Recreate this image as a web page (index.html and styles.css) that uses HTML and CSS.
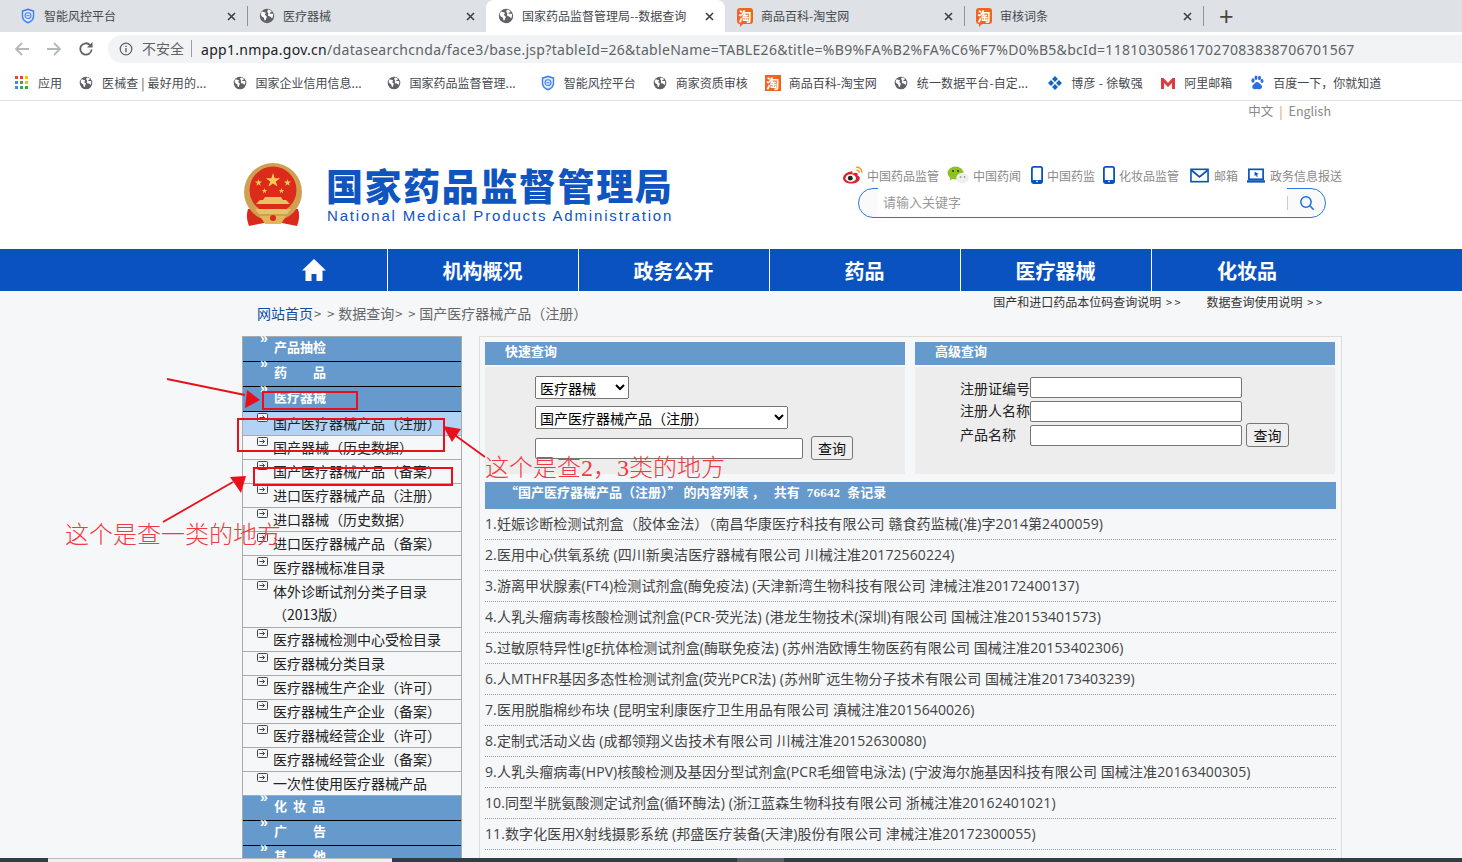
FILE: index.html
```html
<!DOCTYPE html>
<html lang="zh-CN">
<head>
<meta charset="utf-8">
<title>国家药品监督管理局--数据查询</title>
<link rel="stylesheet" href="styles.css">
</head>
<body>
<svg class="defs" width="0" height="0" aria-hidden="true">
  <symbol id="globe" viewBox="0 0 16 16">
    <circle cx="8" cy="8" r="7.2" fill="#5f6368"/>
    <path d="M3 3.600c1.600.2 2.200 1 3.400 1 .9.4.2 1.600-.5 2-.2 1 1.800 1 1.900 2.200 0 1-.8 1.300-.8 2.500-.2 1-.9 1.500-1.400.9-.8-1-.3-2.300-1.200-3-1.400-.2-2.400-1.400-2.500-2.800C2.200 5 2.500 4.200 3 3.600zM9.300 1.600c1.300.2 2.500.9 3.300 1.800-.2.800-1 .8-1.700 1.200-.6.5-.2 1.200.6 1.200.8.100 1.800-.5 2.400.2.300 1.500 0 3-.7 4.200-.5-.1-.8-.8-1.300-1.300-.9-.6-2.300-.5-2.900-1.300-.3-.8.500-1.500.2-2.300-.5-.9-1.100-1.500-.9-2.700.1-.1.300-.2.600-.2z" fill="#fff"/>
  </symbol>
  <symbol id="shield" viewBox="0 0 16 18">
    <path d="M8 .6l7 2.200v6.400c0 3.800-3 6.600-7 8.200-4-1.600-7-4.400-7-8.200V2.800z" fill="#3f7fee"/>
    <path d="M8 2.400l5.400 1.700v5.100c0 2.900-2.300 5.100-5.400 6.400-3.100-1.300-5.400-3.500-5.400-6.400V4.100z" fill="#dfeafc"/>
    <circle cx="8" cy="8.600" r="3.300" fill="none" stroke="#3f7fee" stroke-width="1.200"/>
    <path d="M6.400 8.600h3.200" stroke="#3f7fee" stroke-width="1.200"/>
  </symbol>
  <symbol id="phone" viewBox="0 0 12 18">
    <rect x=".9" y=".9" width="10.200" height="16.200" rx="1.800" fill="none" stroke="#0b52c1" stroke-width="1.800"/>
    <path d="M1 14h10v3H1z" fill="#0b52c1"/>
    <circle cx="6" cy="15.300" r=".9" fill="#fff"/>
  </symbol>
  <symbol id="box" viewBox="0 0 11 9">
    <rect x=".5" y=".5" width="10" height="8" rx="1" fill="#f4f4f4" stroke="#444"/>
    <path d="M2.500 4.500h5M5.500 2.500l2 2-2 2" fill="none" stroke="#444"/>
  </symbol>
  <symbol id="close" viewBox="0 0 9 9">
    <path d="M1 1l7 7M8 1L1 8" fill="none" stroke="#3c4043" stroke-width="1.600"/>
  </symbol>
</svg>

<header class="chrome">
  <div class="tabs">
    <div class="tab"><svg class="ico16"><use href="#shield"/></svg><span class="tab-t">智能风控平台</span><svg class="tab-x"><use href="#close"/></svg></div>
    <div class="tab"><svg class="ico16"><use href="#globe"/></svg><span class="tab-t">医疗器械</span><svg class="tab-x"><use href="#close"/></svg></div>
    <div class="tab tab-on"><svg class="ico16"><use href="#globe"/></svg><span class="tab-t">国家药品监督管理局--数据查询</span><svg class="tab-x"><use href="#close"/></svg></div>
    <div class="tab"><span class="tao tao-tab">淘</span><span class="tab-t">商品百科-淘宝网</span><svg class="tab-x"><use href="#close"/></svg></div>
    <div class="tab"><span class="tao tao-tab">淘</span><span class="tab-t">审核词条</span><svg class="tab-x"><use href="#close"/></svg></div>
    <span class="tab-plus">+</span>
  </div>
  <div class="toolbar">
    <svg class="tb-ico" viewBox="0 0 16 16"><path d="M15 8H2M8 2L2 8l6 6" fill="none" stroke="#b4b7bb" stroke-width="1.800"/></svg>
    <svg class="tb-ico" viewBox="0 0 16 16"><path d="M1 8h13M8 2l6 6-6 6" fill="none" stroke="#b4b7bb" stroke-width="1.800"/></svg>
    <svg class="tb-ico" viewBox="0 0 16 16"><path d="M13.600 8.500a5.700 5.700 0 1 1-1.500-4.400" fill="none" stroke="#5f6368" stroke-width="1.800"/><path d="M14.500 1v5.500H9z" fill="#5f6368"/></svg>
    <div class="omni">
      <svg class="omni-i" viewBox="0 0 14 14"><circle cx="7" cy="7" r="5.800" fill="none" stroke="#5f6368" stroke-width="1.300"/><path d="M7 6v4.200M7 3.800v1.300" stroke="#5f6368" stroke-width="1.400"/></svg>
      <span class="omni-s">不安全</span>
      <span class="omni-url"><b>app1.nmpa.gov.cn</b>/datasearchcnda/face3/base.jsp?tableId=26&amp;tableName=TABLE26&amp;title=%B9%FA%B2%FA%C6%F7%D0%B5&amp;bcId=118103058617027083838706701567</span>
    </div>
  </div>
  <nav class="bookmarks">
    <span class="bm"><svg class="ico14" viewBox="0 0 14 14"><g><rect x="0" y="0" width="3" height="3" fill="#ea4335"/><rect x="5" y="0" width="3" height="3" fill="#ea4335"/><rect x="10" y="0" width="3" height="3" fill="#fbbc04"/><rect x="0" y="5" width="3" height="3" fill="#4285f4"/><rect x="5" y="5" width="3" height="3" fill="#34a853"/><rect x="10" y="5" width="3" height="3" fill="#fbbc04"/><rect x="0" y="10" width="3" height="3" fill="#4285f4"/><rect x="5" y="10" width="3" height="3" fill="#34a853"/><rect x="10" y="10" width="3" height="3" fill="#34a853"/></g></svg>应用</span>
    <span class="bm bm-a"><svg class="ico14"><use href="#globe"/></svg>医械查 | 最好用的...</span>
    <span class="bm bm-b"><svg class="ico14"><use href="#globe"/></svg>国家企业信用信息...</span>
    <span class="bm bm-c"><svg class="ico14"><use href="#globe"/></svg>国家药品监督管理...</span>
    <span class="bm bm-16"><svg class="ico16"><use href="#shield"/></svg>智能风控平台</span>
    <span class="bm"><svg class="ico14"><use href="#globe"/></svg>商家资质审核</span>
    <span class="bm bm-16"><span class="tao">淘</span>商品百科-淘宝网</span>
    <span class="bm bm-d"><svg class="ico14"><use href="#globe"/></svg>统一数据平台-自定...</span>
    <span class="bm bm-e"><svg class="ico14" viewBox="0 0 14 14"><path d="M7 0l3 3-3 3-3-3zM3 4l3 3-3 3-3-3zM11 4l3 3-3 3-3-3zM7 8l3 3-3 3-3-3z" fill="#1565c0"/></svg>博彦 - 徐敏强</span>
    <span class="bm bm-16"><svg class="ico16" viewBox="0 0 16 14"><path d="M1 13V2h2.500L8 7l4.500-5H15v11h-3V7L8 11 4 7v6z" fill="#e0393e"/></svg>阿里邮箱</span>
    <span class="bm bm-16"><svg class="ico16" viewBox="0 0 16 16"><g fill="#2f6fe0"><ellipse cx="4" cy="5.500" rx="1.600" ry="2.200"/><ellipse cx="7" cy="2.800" rx="1.500" ry="2.200"/><ellipse cx="10.500" cy="3" rx="1.500" ry="2.200"/><ellipse cx="13" cy="6" rx="1.500" ry="2"/><path d="M8 7c-2 0-2.500 2-4 3-1.500 1.500-.5 4.500 2 4.200 1-.1 1.500-.3 2.200-.3s1.500.3 2.300.3c2.500 0 3.300-2.700 1.800-4.200C10.800 9 10 7 8 7z"/></g></svg>百度一下，你就知道</span>
  </nav>
</header>

<div class="site-top">
  <div class="wrap">
    <div class="lang">中文<i>|</i>English</div>
    <div class="brand">
      <svg class="emblem" viewBox="0 0 60 64">
        <path d="M5 46c-2 6-1 12 1 17l15-3h18l15 3c2-5 3-11 1-17z" fill="#d92a1c"/>
        <circle cx="30" cy="29" r="29" fill="#cfa052"/>
        <circle cx="30" cy="27" r="23.500" fill="#dc2b1b"/>
        <path d="M30 10l1.700 5.200h5.500l-4.400 3.200 1.700 5.200-4.500-3.200-4.500 3.200 1.700-5.200-4.400-3.200h5.500z" fill="#f5cd55"/>
        <path d="M15.500 16l.9 2.600h2.700l-2.200 1.600.9 2.600-2.300-1.600-2.200 1.600.8-2.600-2.200-1.600h2.700zM44.500 16l.9 2.600h2.700l-2.200 1.600.9 2.600-2.300-1.600-2.200 1.600.8-2.600-2.200-1.600h2.700zM21.500 25l.7 2h2.200l-1.800 1.300.7 2.100-1.800-1.300-1.800 1.300.7-2.100-1.800-1.300h2.200zM38.500 25l.7 2h2.200l-1.800 1.300.7 2.100-1.800-1.300-1.800 1.300.7-2.100-1.800-1.300h2.200z" fill="#f3c64c"/>
        <path d="M13 41h34l-4-4h-3l-2-3H22l-2 3h-3z" fill="#e9c267"/>
        <path d="M16 41h28v5H16z" fill="#dc2b1b"/>
        <path d="M12 46h36l-4 5H16z" fill="#e9c267"/>
        <path d="M17 53h26l-5 8H22z" fill="#e4b65a"/>
        <circle cx="30" cy="55" r="3" fill="#d92a1c"/>
      </svg>
      <div class="wordmark">
        <h1 class="wm-cn">国家药品监督管理局</h1>
        <p class="wm-en">National Medical Products Administration</p>
      </div>
      <div class="tools">
        <div class="links">
          <span class="lnk"><svg class="weibo" viewBox="0 0 24 20"><path d="M10 6C5 6.500 1 10 1 13.500S5 19.500 10 19.500s9.500-2.500 9.500-6c0-2-2-2.500-2.500-3 .6-1.500.3-3-2-3-1.200 0-2.500.5-3.500 1 .2-2-.4-3-1.500-2.500z" fill="#d8232a"/><ellipse cx="9.500" cy="13.500" rx="5.800" ry="4.200" fill="#fff"/><circle cx="9" cy="13.500" r="2.700" fill="#222"/><path d="M15.500 1.500c3.500-.5 6.500 2 6.500 6M15.800 4.700c1.700-.2 3.200 1 3.200 2.800" fill="none" stroke="#f39a1e" stroke-width="1.700"/></svg>中国药品监管</span>
          <span class="lnk lnk-w"><svg class="wechat" viewBox="0 0 22 18"><ellipse cx="8.500" cy="7" rx="8" ry="6.500" fill="#8ec31f"/><path d="M3.500 11l-1 3.500 4-2z" fill="#8ec31f"/><ellipse cx="15.500" cy="12" rx="6.200" ry="5.200" fill="#eee"/><circle cx="6" cy="5" r="1" fill="#333"/><circle cx="11" cy="5" r="1" fill="#333"/><circle cx="13.500" cy="11" r=".8" fill="#777"/><circle cx="17.500" cy="11" r=".8" fill="#777"/></svg>中国药闻</span>
          <span class="lnk"><svg class="phone"><use href="#phone"/></svg>中国药监</span>
          <span class="lnk"><svg class="phone"><use href="#phone"/></svg>化妆品监管</span>
          <span class="lnk"><svg class="mail" viewBox="0 0 20 15"><rect x="1" y="1" width="18" height="13" fill="none" stroke="#0b52c1" stroke-width="1.700"/><path d="M1.500 2l8.500 7 8.500-7" fill="none" stroke="#0b52c1" stroke-width="1.900"/></svg>邮箱</span>
          <span class="lnk"><svg class="screen" viewBox="0 0 19 15"><rect x="2" y="1" width="15" height="10.500" fill="none" stroke="#0b52c1" stroke-width="1.800"/><path d="M0 12.500h19V15H0z" fill="#0b52c1"/><path d="M8 3.500l4.500 2.500-2 .6 1 2-1 .4-1-2-1.500 1.200z" fill="#0b52c1"/></svg>政务信息报送</span>
        </div>
        <div class="search">
          <input class="search-in" type="text" placeholder="请输入关键字">
          <span class="search-sep"></span>
          <svg class="search-i" viewBox="0 0 16 16"><circle cx="7" cy="7" r="5.200" fill="none" stroke="#1a6fd8" stroke-width="1.500"/><path d="M10.800 10.800l4 4" stroke="#1a6fd8" stroke-width="1.600"/></svg>
        </div>
      </div>
    </div>
  </div>
</div>

<nav class="mainnav">
  <div class="wrap nav-row">
    <a class="nav-home"><svg class="home" viewBox="0 0 24 22"><path d="M12 0l12 11.500h-3.500V22H14.500v-7h-5v7H3.500V11.500H0z" fill="#fff"/></svg></a>
    <a class="nav-i">机构概况</a>
    <a class="nav-i">政务公开</a>
    <a class="nav-i">药品</a>
    <a class="nav-i">医疗器械</a>
    <a class="nav-i">化妆品</a>
  </div>
</nav>

<main class="page">
  <div class="wrap">
    <div class="crumbs">
      <div class="crumb"><a class="crumb-home">网站首页</a><span class="gt">&gt; &gt;</span> 数据查询<span class="gt">&gt; &gt;</span> 国产医疗器械产品（注册）</div>
      <div class="help"><span>国产和进口药品本位码查询说明 <em>&gt; &gt;</em></span><span>数据查询使用说明 <em>&gt; &gt;</em></span></div>
    </div>
    <div class="cols">
      <aside class="side">
        <div class="s-head">产品抽检</div>
        <div class="s-head s-wide">药 品</div>
        <div class="s-head">医疗器械</div>
        <ul class="s-list">
          <li class="on"><svg class="s-box"><use href="#box"/></svg>国产医疗器械产品（注册）</li>
          <li><svg class="s-box"><use href="#box"/></svg>国产器械（历史数据）</li>
          <li><svg class="s-box"><use href="#box"/></svg>国产医疗器械产品（备案）</li>
          <li><svg class="s-box"><use href="#box"/></svg>进口医疗器械产品（注册）</li>
          <li><svg class="s-box"><use href="#box"/></svg>进口器械（历史数据）</li>
          <li><svg class="s-box"><use href="#box"/></svg>进口医疗器械产品（备案）</li>
          <li><svg class="s-box"><use href="#box"/></svg>医疗器械标准目录</li>
          <li class="two"><svg class="s-box"><use href="#box"/></svg>体外诊断试剂分类子目录（2013版）</li>
          <li><svg class="s-box"><use href="#box"/></svg>医疗器械检测中心受检目录</li>
          <li><svg class="s-box"><use href="#box"/></svg>医疗器械分类目录</li>
          <li><svg class="s-box"><use href="#box"/></svg>医疗器械生产企业（许可）</li>
          <li><svg class="s-box"><use href="#box"/></svg>医疗器械生产企业（备案）</li>
          <li><svg class="s-box"><use href="#box"/></svg>医疗器械经营企业（许可）</li>
          <li><svg class="s-box"><use href="#box"/></svg>医疗器械经营企业（备案）</li>
          <li><svg class="s-box"><use href="#box"/></svg>一次性使用医疗器械产品</li>
        </ul>
        <div class="s-head s-mid">化 妆 品</div>
        <div class="s-head s-wide">广 告</div>
        <div class="s-head s-wide">其 他</div>
      </aside>
      <section class="panel">
        <div class="forms">
          <div class="form-box">
            <h2 class="bar">快速查询</h2>
            <form class="fb quick">
              <select class="sel1"><option>医疗器械</option></select>
              <select class="sel2"><option>国产医疗器械产品（注册）</option></select>
              <div class="q-row"><input class="q-in" type="text"><button class="btn" type="button">查询</button></div>
            </form>
          </div>
          <div class="form-box">
            <h2 class="bar">高级查询</h2>
            <form class="fb adv">
              <label class="a-l a-first">注册证编号</label><input class="a-in" type="text"><span></span>
              <label class="a-l">注册人名称</label><input class="a-in" type="text"><span></span>
              <label class="a-l">产品名称</label><input class="a-in" type="text"><button class="btn" type="button">查询</button>
            </form>
          </div>
        </div>
        <h2 class="bar list-bar">“国产医疗器械产品（注册）” 的内容列表 ， &ensp;共有 <span class="cnt">76642</span> 条记录</h2>
        <ol class="results">
          <li>1.妊娠诊断检测试剂盒（胶体金法）（南昌华康医疗科技有限公司 赣食药监械(准)字2014第2400059)</li>
          <li>2.医用中心供氧系统 (四川新奥洁医疗器械有限公司 川械注准20172560224)</li>
          <li>3.游离甲状腺素(FT4)检测试剂盒(酶免疫法) (天津新湾生物科技有限公司 津械注准20172400137)</li>
          <li>4.人乳头瘤病毒核酸检测试剂盒(PCR-荧光法) (港龙生物技术(深圳)有限公司 国械注准20153401573)</li>
          <li>5.过敏原特异性IgE抗体检测试剂盒(酶联免疫法) (苏州浩欧博生物医药有限公司 国械注准20153402306)</li>
          <li>6.人MTHFR基因多态性检测试剂盒(荧光PCR法) (苏州旷远生物分子技术有限公司 国械注准20173403239)</li>
          <li>7.医用脱脂棉纱布块 (昆明宝利康医疗卫生用品有限公司 滇械注准2015640026)</li>
          <li>8.定制式活动义齿 (成都领翔义齿技术有限公司 川械注准20152630080)</li>
          <li>9.人乳头瘤病毒(HPV)核酸检测及基因分型试剂盒(PCR毛细管电泳法) (宁波海尔施基因科技有限公司 国械注准20163400305)</li>
          <li>10.同型半胱氨酸测定试剂盒(循环酶法) (浙江蓝森生物科技有限公司 浙械注准20162401021)</li>
          <li>11.数字化医用X射线摄影系统 (邦盛医疗装备(天津)股份有限公司 津械注准20172300055)</li>
        </ol>
      </section>
    </div>
  </div>
</main>

<svg class="marks" viewBox="0 0 1462 862" aria-hidden="true">
  <g fill="none" stroke="#e8101a" stroke-width="2">
    <rect x="263" y="392" width="94" height="17"/>
    <rect x="238" y="419" width="206" height="32"/>
    <rect x="254" y="468" width="198" height="17"/>
    <path d="M167 379l78 16M163 522l70-40M485 457l-33-24" stroke-width="1.800"/>
  </g>
  <g fill="#e8101a">
    <path d="M260 400l-15 8 2-18z"/>
    <path d="M246 476l-5 17-11-16z"/>
    <path d="M443 426l18 3-9 13z"/>
  </g>
</svg>
<div class="note note-a">这个是查2，3类的地方</div>
<div class="note note-b">这个是查一类的地方</div>

<footer class="taskbar"><span class="tk-a"></span><span class="tk-b"></span></footer>
</body>
</html>
```
FILE: styles.css
```css
* { box-sizing: border-box; }
html, body { margin: 0; height: 100%; }
body {
  width: 1462px; height: 862px; overflow: hidden; position: relative;
  background: #f6f7f9; color: #222;
  font-family: "Noto Sans CJK SC", "Noto Sans", sans-serif; font-size: 14px;
}
.defs { position: absolute; }
h1, h2, p, ul, ol { margin: 0; padding: 0; list-style: none; font-weight: normal; }
.ico16 { width: 16px; height: 16px; flex: none; }
.ico14 { width: 14px; height: 14px; flex: none; }

/* browser chrome */
.chrome { background: #fff; border-bottom: 1px solid #dfdfdf; height: 101px; }
.tabs { display: flex; align-items: center; height: 32px; background: #dee1e6; padding-left: 8px; }
.tab { width: 239px; height: 32px; display: flex; align-items: center; padding: 0 11px 0 12px; font-size: 12px; color: #45494e; position: relative; }
.tab::after { content: ""; position: absolute; right: -1px; top: 6px; height: 20px; width: 1px; background: #8f9296; }
.tab:nth-child(2)::after, .tab-on::after { display: none; }
.tab-on { background: #fff; border-radius: 8px 8px 0 0; }
.tab-t { margin-left: 8px; flex: 1; white-space: nowrap; line-height: 16px; }
.tab-x { width: 9px; height: 9px; flex: none; }
.tab-plus { font-size: 25px; line-height: 30px; color: #444; margin-left: 16px; font-family: "Liberation Sans", sans-serif; }
.tao { width: 16px; height: 16px; flex: none; background: #f2641e; color: #fff; font-size: 13px; font-weight: 700; line-height: 16px; text-align: center; position: relative; }
.tao-tab { border-radius: 3px; }
.tao-tab::after { content: ""; position: absolute; left: 3px; bottom: -3px; border: 2px solid transparent; border-top-color: #f2641e; border-left-color: #f2641e; }
.toolbar { height: 33px; display: flex; align-items: center; padding-left: 14px; gap: 16px; }
.tb-ico { width: 16px; height: 16px; flex: none; }
.omni { margin-left: -2px; flex: 1; height: 28px; background: #f1f3f4; border-radius: 14px 0 0 14px; display: flex; align-items: center; padding-left: 11px; white-space: nowrap; }
.omni-i { width: 14px; height: 14px; flex: none; }
.omni-s { margin-left: 9px; padding-right: 7px; border-right: 1px solid #9a9da1; line-height: 17px; color: #5f6368; font-size: 14px; }
.omni-url { margin-left: 9px; padding-top: 2px; font-family: "Noto Sans", sans-serif; font-size: 14px; letter-spacing: .3px; color: #5f6368; line-height: 20px; }
.omni-url b { font-weight: normal; color: #202124; }
.bookmarks { height: 35px; display: flex; align-items: center; padding-left: 15px; font-size: 12px; color: #45494e; white-space: nowrap; }
.bm { display: flex; align-items: center; gap: 9px; margin-right: 17px; line-height: 16px; }
.bm-16 { gap: 8px; }
.bm-a { margin-right: 26px; letter-spacing: .15px; }
.bm-b { margin-right: 25px; }
.bm-c { margin-right: 24px; }
.bm-d { margin-right: 20px; letter-spacing: .1px; }
.bm-e { letter-spacing: .3px; }

/* site header */
.wrap { width: 1100px; margin-left: 242px; }
.site-top { background: #fff; height: 148px; }
.lang { height: 21px; line-height: 20px; text-align: right; padding-right: 11px; font-size: 12.500px; color: #888; }
.lang i { font-style: normal; margin: 0 6px; color: #d8965a; }
.brand { display: flex; padding-top: 41px; }
.emblem { width: 60px; height: 64px; margin-left: 1px; flex: none; }
.wordmark { margin-left: 24px; padding-top: 2px; color: #0f54bf; }
.wm-cn { font-size: 37px; line-height: 40px; font-weight: 900; letter-spacing: 1.600px; margin-left: -1px; white-space: nowrap; }
.wm-en { font-family: "Liberation Sans", sans-serif; font-size: 15px; line-height: 18px; margin-top: 2px; letter-spacing: 1.840px; white-space: nowrap; }
.tools { margin-left: auto; width: 500px; padding-top: 3px; }
.links { display: flex; height: 18px; align-items: center; font-size: 12px; color: #8a8a8a; white-space: nowrap; }
.lnk { display: flex; align-items: center; margin-right: 8px; }
.lnk-w { margin-right: 10px; }
.lnk:last-child { margin-right: 0; }
.weibo { width: 22px; height: 18px; margin-right: 3px; }
.wechat { width: 22px; height: 18px; margin-right: 4px; }
.phone { width: 12px; height: 18px; margin-right: 4px; }
.mail { width: 19px; height: 15px; margin-left: 3px; margin-right: 5px; }
.screen { width: 18px; height: 15px; margin-left: 1px; margin-right: 5px; }
.search { margin: 4px 0 0 16px; width: 468px; height: 30px; border: 1px solid #2a78dc; border-radius: 15px; background: #fafafa; display: flex; align-items: center; padding-right: 10px; }
.search-in { margin-left: 19px; width: 411px; height: 28px; margin-top: -2px; border: 0; background: #fff; outline: 0; padding: 0 5px 1px; font: 13px "Noto Sans CJK SC", sans-serif; }
.search-in::placeholder { color: #999; }
.search-sep { width: 1px; height: 14px; background: #ccc; flex: none; }
.search-i { width: 16px; height: 16px; margin-left: 11px; }

/* main navigation */
.mainnav { background: #0b52c1; height: 42px; }
.nav-row { display: flex; height: 42px; }
.nav-home, .nav-i { display: flex; align-items: center; justify-content: center; padding-right: 1px; border-right: 1px solid #fff; color: #fff; font-size: 20px; font-weight: 700; flex: none; }
.nav-home { width: 146px; }
.nav-i { width: 191px; }
.nav-i:last-child { border-right: 0; }
.home { width: 24px; height: 22px; }

/* page */
.crumbs { height: 46px; display: flex; justify-content: space-between; }
.crumb { padding: 13px 0 0 15px; line-height: 18px; font-size: 14px; color: #666; white-space: nowrap; }
.crumb-home { color: #0b4ea2; }
.gt { display: inline-block; width: 21px; font-size: 13px; letter-spacing: 1.500px; margin-left: 1px; }
.help { display: flex; gap: 26px; padding: 2px 20px 0 0; font-size: 12px; line-height: 18px; color: #333; white-space: nowrap; }
.help em { font-style: normal; font-size: 11px; margin-left: 2px; }
.cols { display: flex; gap: 17px; }

.side { width: 220px; flex: none; border-left: 1px solid #aaa; border-right: 1px solid #aaa; border-top: 1px solid #aaa; margin-top: -1px; }
.s-head { position: relative; height: 25px; line-height: 19px; background: #6699cc; border-bottom: 1px solid #000; padding-left: 31px; color: #fff; font-size: 13px; font-weight: 700; }
.s-head::before { content: "»"; position: absolute; left: 17px; top: -6px; font: 700 14px/14px "Liberation Sans", sans-serif; }
.s-wide { word-spacing: 23px; }
.s-mid { word-spacing: 3px; }
.s-list li { position: relative; height: 24px; line-height: 22px; border-bottom: 1px solid #aaa; padding-left: 30px; color: #222; font-size: 14px; white-space: nowrap; }
.s-list li.on { background: #b2d3f6; }
.s-list li.two { height: 48px; line-height: 23px; white-space: normal; padding-right: 24px; }
.s-box { position: absolute; left: 14px; top: 1px; width: 11px; height: 9px; }

.panel { flex: 1; margin-top: -1px; height: 530px; border: 1px solid #dcdcdc; border-bottom: 0; padding: 5px 0 0 5px; }
.forms { display: flex; gap: 10px; }
.form-box { width: 420px; }
.bar { background: #6699cc; color: #fff; font-size: 13px; font-weight: 700; height: 23px; line-height: 17px; padding-left: 20px; }
.fb { margin-top: 2px; height: 107px; background: #ededed; }
.quick { display: flex; flex-direction: column; align-items: flex-start; padding: 9px 0 0 50px; }
.sel1, .sel2, .a-in, .q-in, .btn { font-family: "Noto Sans CJK SC", sans-serif; font-size: 14px; }
.sel1 { width: 94px; height: 23px; padding: 0; }
.sel2 { width: 253px; height: 23px; margin-top: 7px; padding: 0; }
.q-row { display: flex; align-items: center; margin-top: 7px; }
.q-in { width: 268px; height: 21px; padding: 1px 2px; border: 1px solid #767676; border-radius: 2px; }
.btn { margin-left: 8px; width: 42px; height: 24px; padding: 0; line-height: 20px; border: 1px solid #767676; border-radius: 3px; background: #efefef; color: #111; }
.adv { display: grid; grid-template-columns: 70px 212px auto; grid-auto-rows: 24px; padding: 8px 0 0 45px; align-items: center; justify-items: start; }
.a-l { font-size: 14px; line-height: 18px; margin-bottom: 2px; color: #222; white-space: nowrap; }
.a-first { margin-top: 2px; margin-bottom: 0; }
.a-in { width: 212px; height: 21px; padding: 1px 2px; border: 1px solid #767676; border-radius: 2px; }
.adv .btn { margin-left: 4px; width: 43px; height: 24px; }
.list-bar { margin-top: 8px; width: 851px; height: 27px; line-height: 20px; padding-left: 20px; white-space: nowrap; font-size: 13px; }
.cnt { font-family: "Liberation Serif", serif; letter-spacing: .2px; margin: 0 4px; }
.results li { height: 31px; line-height: 30px; border-bottom: 1px dotted #999; width: 851px; color: #444; font-family: "Open Sans", "Noto Sans CJK SC", sans-serif; font-size: 14px; letter-spacing: .1px; white-space: nowrap; }

/* hand-drawn annotations laid over the screenshot */
.marks { position: absolute; left: 0; top: 0; width: 1462px; height: 862px; pointer-events: none; }
.note { position: absolute; color: #f03a3f; font-family: "Liberation Serif", "Noto Sans CJK SC", serif; font-weight: 300; font-size: 24px; white-space: nowrap; line-height: 28px; }
.note-a { left: 485px; top: 454px; }
.note-b { left: 65px; top: 521px; }

.taskbar { position: absolute; left: 0; right: 0; bottom: 0; height: 4px; background: #2f3e46; }
.tk-a { position: absolute; left: 48px; top: 0; width: 344px; height: 4px; background: #f0f0f0; border-top: 1px solid #bbb; }
.tk-b { position: absolute; left: 737px; top: 0; width: 47px; height: 4px; background: #56626a; }
```
